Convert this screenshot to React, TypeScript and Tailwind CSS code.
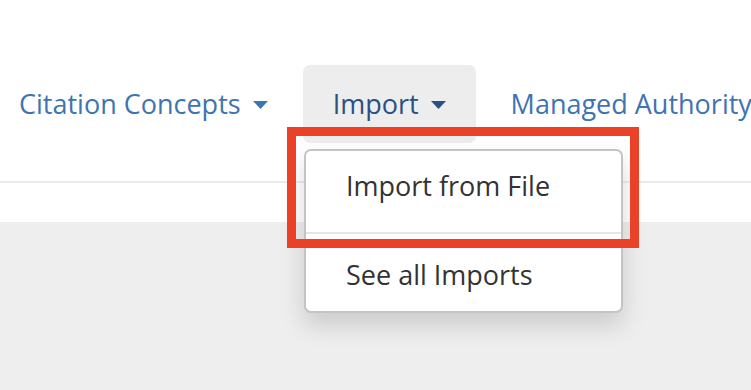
import React from 'react';

const Caret: React.FC<{ color: string }> = ({ color }) => (
  <svg width="15" height="8" viewBox="0 0 15 8" className="ml-[12px] mt-[2px]">
    <path d="M0 0 L15 0 L7.5 8 Z" fill={color} />
  </svg>
);

const NavItem: React.FC<{ label: string; active?: boolean; caret?: boolean }> = ({ label, active, caret = true }) => (
  <div
    className={`flex items-center h-[78px] px-[30px] rounded-[7px] whitespace-nowrap ${
      active ? 'bg-[#ededed] text-[#2b5180]' : 'text-[#3e74b1]'
    }`}
  >
    <span>{label}</span>
    {caret && <Caret color={active ? '#2b5180' : '#3e74b1'} />}
  </div>
);

export default function App() {
  return (
    <div
      className="relative w-[751px] h-[390px] overflow-hidden bg-[#eeeeee]"
      style={{ fontFamily: '"Open Sans", "Noto Sans", sans-serif' }}
    >
      <div className="bg-white h-[222px]">
        <div className="h-[183px] border-b-2 border-[#ebebeb] pt-[65px]">
          <nav className="flex gap-[5px] ml-[-11px] text-[27px]">
            <NavItem label="Citation Concepts" />
            <NavItem label="Import" active />
            <NavItem label="Managed Authority" caret={false} />
          </nav>
        </div>
      </div>

      {/* dropdown menu */}
      <div className="absolute left-[304px] top-[149px] w-[319px] bg-white border-2 border-[#c4c4c4] rounded-[7px] pt-[4px] pb-[5px] shadow-[0_12px_24px_rgba(0,0,0,0.15)] text-[27px] text-[#333333]">
        <div className="px-[40px] h-[62px] flex items-center">Import from File</div>
        <div className="h-[2px] bg-[#e5e5e5] mt-[15px] mb-[10px]" />
        <div className="px-[40px] h-[62px] flex items-center">See all Imports</div>
      </div>

      {/* highlight annotation */}
      <div className="absolute left-[287px] top-[127px] w-[352px] h-[121px] border-[9px] border-[#ea4129]" />
    </div>
  );
}
